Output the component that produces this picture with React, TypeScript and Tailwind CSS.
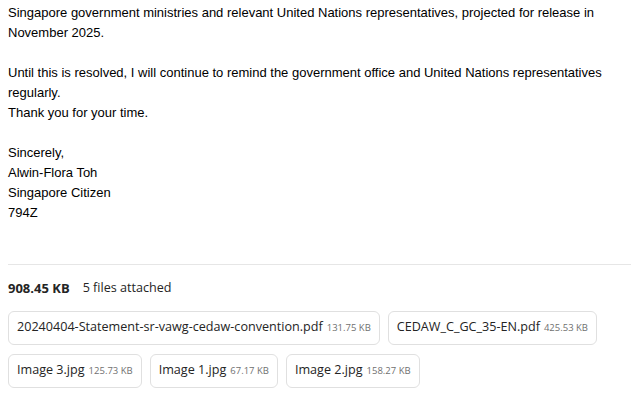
import React from "react";

interface Attachment {
  name: string;
  size: string;
}

const rowOne: Attachment[] = [
  { name: "20240404-Statement-sr-vawg-cedaw-convention.pdf", size: "131.75 KB" },
  { name: "CEDAW_C_GC_35-EN.pdf", size: "425.53 KB" },
];

const rowTwo: Attachment[] = [
  { name: "Image 3.jpg", size: "125.73 KB" },
  { name: "Image 1.jpg", size: "67.17 KB" },
  { name: "Image 2.jpg", size: "158.27 KB" },
];

const AttachmentChip = ({ name, size }: Attachment) => (
  <div className="flex h-[34px] items-center gap-[4px] rounded-md border border-[#e0e0e0] bg-white px-2">
    <span className="text-[12.6px] text-[#242424]">{name}</span>
    <span className="pt-px text-[9.5px] text-[#707070]">{size}</span>
  </div>
);

const App = () => {
  return (
    <div className="h-[412px] w-[631px] overflow-hidden bg-white pl-2 pt-[3px]">
      <div className="font-['Liberation_Sans',Arial,sans-serif] text-[13px] leading-5 text-black">
        <p>
          Singapore government ministries and relevant United Nations representatives, projected for release in
          November 2025.
        </p>
        <br />
        <p>
          Until this is resolved, I will continue to remind the government office and United Nations representatives
          regularly.
        </p>
        <p>Thank you for your time.</p>
        <br />
        <p>Sincerely,</p>
        <p>Alwin-Flora Toh</p>
        <p>Singapore Citizen</p>
        <p>794Z</p>
      </div>

      <div className="mt-[41px] border-t border-[#e6e6e6] font-['Open_Sans','Noto_Sans',sans-serif]">
        <div className="flex items-center gap-[13px] pt-[14px] text-[#242424]">
          <span className="text-[13px] font-bold">908.45 KB</span>
          <span className="text-[12.6px]">5 files attached</span>
        </div>
        <div className="mt-[12px] flex flex-col gap-[9px]">
          <div className="flex gap-2">
            {rowOne.map((a) => (
              <AttachmentChip key={a.name} {...a} />
            ))}
          </div>
          <div className="flex gap-2">
            {rowTwo.map((a) => (
              <AttachmentChip key={a.name} {...a} />
            ))}
          </div>
        </div>
      </div>
    </div>
  );
};

export default App;
